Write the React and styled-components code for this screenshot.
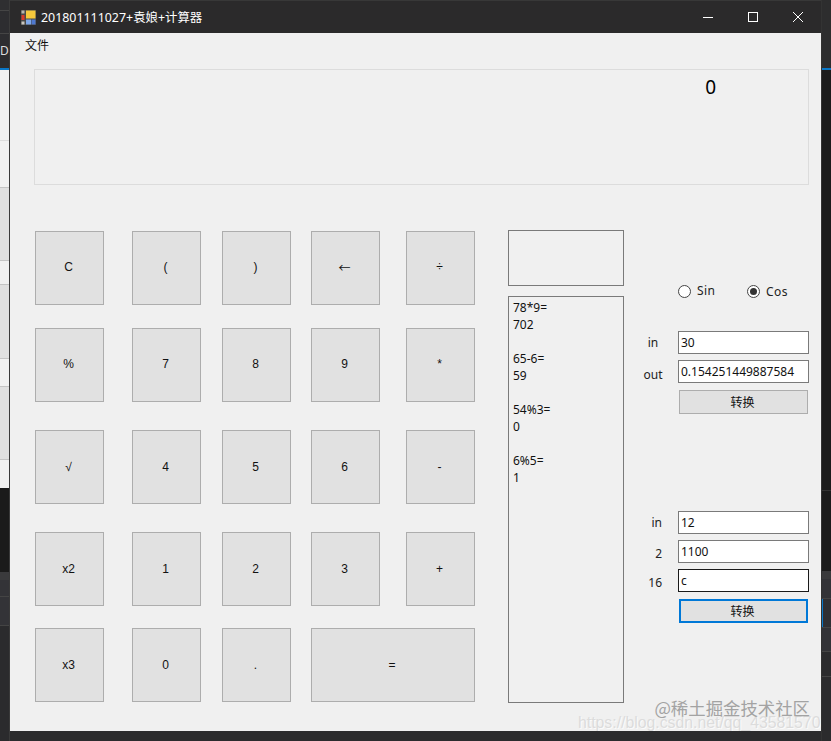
import React from "react";
import styled, { createGlobalStyle } from "styled-components";

const Global = createGlobalStyle`
  html, body { margin: 0; padding: 0; background: #2b2b2d; }
  * { box-sizing: border-box; }
  body { width: 831px; height: 741px; overflow: hidden; font-family: "Noto Sans", "Noto Sans CJK SC", sans-serif; font-size: 12px; color: #111; }
`;

const Desktop = styled.div`display: flex; width: 831px; height: 741px; overflow: hidden;`;
const Strip = styled.div`
  flex: 0 0 10px; width: 10px; height: 741px; display: flex; flex-direction: column; overflow: hidden;
  border-right: ${p => (p.$side === "left" ? "1px solid #3a3a3a" : "0")};
  border-left: ${p => (p.$side === "right" ? "1px solid #333" : "0")};
`;
const Segment = styled.div`
  flex: 0 0 ${p => p.$h}px; background: ${p => p.$bg}; color: #ddd; font-size: 12px; line-height: 34px;
  white-space: nowrap; overflow: hidden; border-top: ${p => (p.$line ? `1px solid ${p.$line}` : "0")};
  box-shadow: ${p => (p.$accent ? "inset 1px 0 0 #0a78c8" : "none")};
`;
const Window = styled.div`
  position: relative; flex: 0 0 811px; width: 811px; height: 731px; background: #f0f0f0;
  display: flex; flex-direction: column; overflow: hidden;
`;
const TitleBar = styled.div`
  flex: 0 0 33px; display: flex; align-items: center; background: #2b2a2b; border-top: 1px solid #383838;
  padding-left: 11px; color: #fff; font-size: 12.4px;
`;
const TitleText = styled.span`margin-left: 5px; flex: 1; white-space: nowrap;`;
const Controls = styled.div`display: flex; padding-right: 1px;`;
const ControlBtn = styled.div`width: 45px; height: 32px; display: flex; align-items: center; justify-content: center;`;
const MenuBar = styled.div`flex: 0 0 24px; padding: 4px 0 0 15px; line-height: 18px; font-size: 12px;`;
const Display = styled.div`
  margin: 12px 0 0 24px; width: 775px; height: 116px; flex: none; border: 1px solid #dcdcdc;
  display: flex; justify-content: flex-end; padding: 5px 92px 0 0; font-size: 19px; line-height: 24px; color: #000;
`;
const Body = styled.div`display: flex; margin-top: 45px; padding-left: 25px;`;
const Keypad = styled.div`
  margin-top: 1px; display: grid;
  grid-template-columns: 69px 28px 69px 21px 69px 20px 69px 26px 69px;
  grid-template-rows: 74px 23px 74px 28px 74px 28px 74px 22px 74px;
`;
const Key = styled.div`
  grid-column: ${p => p.$col * 2 - 1} / span ${p => (p.$wide ? 3 : 1)};
  grid-row: ${p => p.$row * 2 - 1};
  background: #e1e1e1; border: 1px solid #adadad; display: flex; align-items: center; justify-content: center;
  font-family: ${p => (p.$cjk ? '"Noto Sans CJK SC"' : '"Liberation Sans", "Noto Sans CJK SC"')}, sans-serif;
  font-size: 12px; color: #111; padding: 0 2px ${p => (p.$row < 3 ? 2 : 0)}px 0;
`;
const HistoryCol = styled.div`margin-left: 33px; width: 116px; display: flex; flex-direction: column; gap: 10px;`;
const ExprBox = styled.div`height: 56px; border: 1px solid #7a7a7a;`;
const Log = styled.div`height: 407px; border: 1px solid #7a7a7a; padding: 2px 4px; line-height: 17px; white-space: pre; font-size: 12px;`;
const SideCol = styled.div`margin-left: 16px; width: 169px; display: flex; flex-direction: column;`;
const RadioRow = styled.div`margin-top: 54px; height: 14px; padding-left: 38px; display: flex;`;
const RadioItem = styled.div`
  flex: 0 0 69px; display: flex; align-items: center; gap: 6px; font-size: 12px; line-height: 14px;
  margin-top: ${p => p.$drop || 0}px; letter-spacing: 0.4px; color: #222;
`;
const RadioDot = styled.span`
  width: 13px; height: 13px; flex: none; border-radius: 50%; border: 1px solid #444; background: #fff;
  display: flex; align-items: center; justify-content: center;
  &::after { content: ""; width: 7px; height: 7px; border-radius: 50%; background: ${p => (p.$on ? "#333" : "transparent")}; }
`;
const Converter = styled.div`
  margin-top: ${p => p.$top}px; display: grid; grid-template-columns: 30px 131px;
  column-gap: 8px; row-gap: 6px; grid-auto-rows: 23px;
`;
const FieldLabel = styled.div`
  align-self: center; font-size: 12px; line-height: 16px; color: #222;
  text-align: ${p => (p.$right ? "right" : "center")};
  padding-right: ${p => (p.$right ? "8px" : "4px")};
  margin-top: ${p => p.$drop || 0}px;
`;
const TextBox = styled.div`
  height: 23px; background: #fff; border: 1px solid ${p => (p.$focus ? "#1a1a1a" : "#7a7a7a")};
  padding-left: 2px; line-height: 21px; font-size: 12px; color: #111;
`;
const ConvertBtn = styled.div`
  grid-column: 2; margin: 1px 1px 0; height: 24px; background: #e1e1e1; font-size: 12px; padding: 0 2px 1px 0;
  border: ${p => (p.$focus ? "2px solid #0078d7" : "1px solid #adadad")};
  display: flex; align-items: center; justify-content: center;
`;
const MarkCn = styled.div`
  position: absolute; right: 11px; top: 700px; font-size: 17.4px; line-height: 15px; color: #a3a3a3; white-space: nowrap;
  font-family: "Noto Sans CJK SC", sans-serif;
`;
const MarkUrl = styled.div`
  position: absolute; left: 568px; top: 716px; font-size: 15.8px; line-height: 13px; color: #dcdcdc; white-space: nowrap;
  text-shadow: 1px 1px 0 #fbfbfb; font-family: "Liberation Sans", sans-serif;
`;

const AppIcon = () => (
  <svg width="15" height="15" viewBox="0 0 15 15">
    <rect x="0" y="0" width="15" height="15" fill="#4a4a48" />
    <rect x="0.5" y="0.5" width="3" height="3" fill="#b9b6ae" />
    <rect x="0.5" y="5" width="3" height="5" fill="#d93a2b" />
    <rect x="0.5" y="11.5" width="3" height="3" fill="#c9c6be" />
    <rect x="5" y="0.5" width="9.5" height="8" fill="#f6c93c" />
    <rect x="5" y="9.5" width="5" height="5" fill="#7fa7e8" />
    <rect x="10.5" y="9.5" width="4" height="5" fill="#4f79d0" />
  </svg>
);
const MinIcon = () => (<svg width="10" height="10" viewBox="0 0 10 10"><path d="M0 5.5H10" stroke="#fff" strokeWidth="1" /></svg>);
const MaxIcon = () => (<svg width="10" height="10" viewBox="0 0 10 10"><rect x="0.5" y="0.5" width="9" height="9" fill="none" stroke="#fff" /></svg>);
const CloseIcon = () => (<svg width="10" height="10" viewBox="0 0 10 10"><path d="M0 0L10 10M10 0L0 10" stroke="#fff" strokeWidth="1" /></svg>);

const leftRows = [
  { h: 10, bg: "#2f2f31" }, { h: 23, bg: "#2d2d30", line: "#454545" },
  { h: 35, bg: "#2d2d30", line: "#454545", text: "Dc" }, { h: 2, bg: "#0a78c8" },
  { h: 70, bg: "#f1f1f1" }, { h: 47, bg: "#f1f1f1", line: "#dcdcdc" },
  { h: 73, bg: "#e0e0e0", line: "#c4c4c4" }, { h: 24, bg: "#f1f1f1", line: "#c4c4c4" },
  { h: 74, bg: "#e0e0e0", line: "#c4c4c4" }, { h: 28, bg: "#f1f1f1", line: "#c4c4c4" },
  { h: 73, bg: "#e0e0e0", line: "#c4c4c4" }, { h: 29, bg: "#f1f1f1", line: "#c4c4c4" },
  { h: 84, bg: "#1b1b1b" }, { h: 8, bg: "#3a3a3c" }, { h: 16, bg: "#333337" },
  { h: 29, bg: "#333337", line: "#444" }, { h: 116, bg: "#2b2b2d", line: "#444" },
];
const rightRows = [
  { h: 68, bg: "#2d2d2e" }, { h: 2, bg: "#0a78c8" }, { h: 420, bg: "#1b1b1b" }, { h: 81, bg: "#1b1b1b", line: "#333" },
  { h: 8, bg: "#3a3a3c" }, { h: 19, bg: "#333337" }, { h: 29, bg: "#303034", line: "#444", accent: true },
  { h: 24, bg: "#333337", line: "#444" }, { h: 25, bg: "#2b2b2d", line: "#444" }, { h: 65, bg: "#2b2b2d", line: "#444" },
];

const keys = [
  ["C", 1, 1], ["(", 2, 1], [")", 3, 1], ["←", 4, 1], ["÷", 5, 1],
  ["%", 1, 2], ["7", 2, 2], ["8", 3, 2], ["9", 4, 2], ["*", 5, 2],
  ["√", 1, 3], ["4", 2, 3], ["5", 3, 3], ["6", 4, 3], ["-", 5, 3],
  ["x2", 1, 4], ["1", 2, 4], ["2", 3, 4], ["3", 4, 4], ["+", 5, 4],
  ["x3", 1, 5], ["0", 2, 5], [".", 3, 5],
];
const history = "78*9=\n702\n\n65-6=\n59\n\n54%3=\n0\n\n6%5=\n1";

export default function App() {
  return (
    <Desktop>
      <Global />
      <Strip $side="left">
        {leftRows.map((r, i) => <Segment key={i} $h={r.h} $bg={r.bg} $line={r.line}>{r.text}</Segment>)}
      </Strip>
      <Window>
        <TitleBar>
          <AppIcon />
          <TitleText>201801111027+袁娘+计算器</TitleText>
          <Controls>
            <ControlBtn><MinIcon /></ControlBtn>
            <ControlBtn><MaxIcon /></ControlBtn>
            <ControlBtn><CloseIcon /></ControlBtn>
          </Controls>
        </TitleBar>
        <MenuBar>文件</MenuBar>
        <Display>0</Display>
        <Body>
          <Keypad>
            {keys.map(([t, c, r]) => <Key key={t} $col={c} $row={r} $cjk={t === "←"}>{t}</Key>)}
            <Key $col={4} $row={5} $wide>=</Key>
          </Keypad>
          <HistoryCol>
            <ExprBox />
            <Log>{history}</Log>
          </HistoryCol>
          <SideCol>
            <RadioRow>
              <RadioItem><RadioDot />Sin</RadioItem>
              <RadioItem $drop={1}><RadioDot $on />Cos</RadioItem>
            </RadioRow>
            <Converter $top={33}>
              <FieldLabel>in</FieldLabel><TextBox>30</TextBox>
              <FieldLabel $drop={6}>out</FieldLabel><TextBox>0.154251449887584</TextBox>
              <ConvertBtn>转换</ConvertBtn>
            </Converter>
            <Converter $top={99}>
              <FieldLabel $right>in</FieldLabel><TextBox>12</TextBox>
              <FieldLabel $right $drop={5}>2</FieldLabel><TextBox>1100</TextBox>
              <FieldLabel $right $drop={5}>16</FieldLabel><TextBox $focus>c</TextBox>
              <ConvertBtn $focus>转换</ConvertBtn>
            </Converter>
          </SideCol>
        </Body>
        <MarkUrl>https://blog.csdn.net/qq_43581570</MarkUrl>
        <MarkCn>@稀土掘金技术社区</MarkCn>
      </Window>
      <Strip $side="right">
        {rightRows.map((r, i) => <Segment key={i} $h={r.h} $bg={r.bg} $line={r.line} $accent={r.accent} />)}
      </Strip>
    </Desktop>
  );
}
